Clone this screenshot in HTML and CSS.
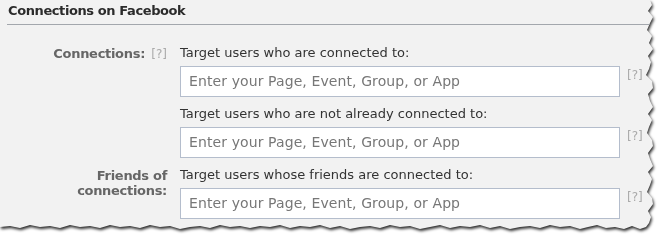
FILE: index.html
```html
<!DOCTYPE html>
<html lang="en">
<head>
  <meta charset="UTF-8">
  <title>Connections on Facebook</title>
  <link rel="stylesheet" href="styles.css">
</head>
<body>
  <div class="paper-shadow">
    <div class="paper">
      <div class="section-title">Connections on Facebook</div>

      <div class="form">
        <div class="label">Connections: <span class="help">[?]</span></div>
        <div class="field">
          <div class="field-title">Target users who are connected to:</div>
          <div class="field-row">
            <div class="input">Enter your Page, Event, Group, or App</div>
            <span class="help">[?]</span>
          </div>
        </div>

        <div class="label"></div>
        <div class="field">
          <div class="field-title">Target users who are not already connected to:</div>
          <div class="field-row">
            <div class="input">Enter your Page, Event, Group, or App</div>
            <span class="help">[?]</span>
          </div>
        </div>

        <div class="label">Friends of<br>connections:</div>
        <div class="field">
          <div class="field-title">Target users whose friends are connected to:</div>
          <div class="field-row">
            <div class="input">Enter your Page, Event, Group, or App</div>
            <span class="help">[?]</span>
          </div>
        </div>
      </div>
    </div>
  </div>
</body>
</html>
```

FILE: styles.css
```css
body {
  margin: 0;
  background-color: #ffffff;
  font-family: "DejaVu Sans", sans-serif;
  width: 664px;
  height: 241px;
  overflow: hidden;
}
.paper-shadow {
  filter: drop-shadow(1px 2px 1.5px rgba(0, 0, 0, 0.85));
}
.paper {
  background-color: #f2f2f2;
  height: 234px;
  clip-path: polygon(0 0, 650px 0, 652px 5px, 648px 11px, 653px 17px, 650px 23px, 647px 30px, 652px 36px, 649px 43px, 653px 49px, 648px 56px, 651px 62px, 649px 69px, 646px 75px, 652px 81px, 653px 88px, 648px 94px, 650px 101px, 653px 107px, 648px 114px, 652px 120px, 649px 127px, 647px 133px, 652px 140px, 653px 146px, 648px 153px, 650px 159px, 653px 166px, 648px 172px, 652px 179px, 650px 185px, 647px 192px, 652px 198px, 653px 204px, 648px 211px, 651px 217px, 649px 223px, 646px 227px, 640px 229px, 632px 226px, 624px 229px, 615px 227px, 606px 228px, 597px 225px, 588px 227px, 580px 229px, 570px 226px, 560px 227px, 550px 225px, 540px 228px, 530px 226px, 520px 227px, 510px 229px, 500px 226px, 490px 228px, 480px 225px, 470px 227px, 460px 226px, 450px 228px, 440px 225px, 430px 227px, 420px 229px, 410px 226px, 400px 227px, 390px 225px, 380px 228px, 370px 226px, 360px 227px, 350px 229px, 340px 226px, 330px 228px, 320px 225px, 310px 227px, 300px 226px, 290px 228px, 280px 225px, 270px 227px, 260px 226px, 250px 228px, 240px 226px, 230px 227px, 220px 225px, 210px 228px, 200px 226px, 190px 227px, 180px 229px, 170px 226px, 160px 227px, 150px 225px, 140px 228px, 130px 226px, 120px 227px, 110px 225px, 100px 228px, 90px 226px, 80px 227px, 70px 225px, 60px 228px, 50px 226px, 40px 227px, 30px 225px, 20px 228px, 10px 226px, 0 227px);
}
.section-title {
  margin: 0 0 0 7px;
  padding: 3px 0 0 1px;
  height: 21px;
  border-bottom: 1px solid #a3a7ad;
  font-size: 13px;
  font-weight: bold;
  letter-spacing: -0.4px;
  color: #2b2b2b;
  line-height: 16px;
}
.form {
  display: grid;
  grid-template-columns: 167px 1fr;
  column-gap: 13px;
  row-gap: 8px;
  padding-top: 19px;
}
.label {
  text-align: right;
  font-size: 13px;
  font-weight: bold;
  letter-spacing: -0.3px;
  color: #666666;
  line-height: 15px;
  padding-top: 2px;
}
.label .help {
  font-weight: normal;
  letter-spacing: 0;
  margin-left: 2px;
}
.help {
  font-size: 12px;
  color: #aaaaaa;
}
.field-title {
  font-size: 13px;
  color: #333333;
  line-height: 18px;
  margin-bottom: 4px;
}
.field-row {
  display: flex;
  align-items: flex-start;
  gap: 7px;
}
.field-row .help {
  padding-top: 2px;
}
.input {
  width: 430px;
  height: 29px;
  padding-left: 8px;
  background-color: #ffffff;
  border: 1px solid #b4bdcc;
  font-size: 14px;
  letter-spacing: 0.1px;
  color: #777777;
  line-height: 29px;
}
```
